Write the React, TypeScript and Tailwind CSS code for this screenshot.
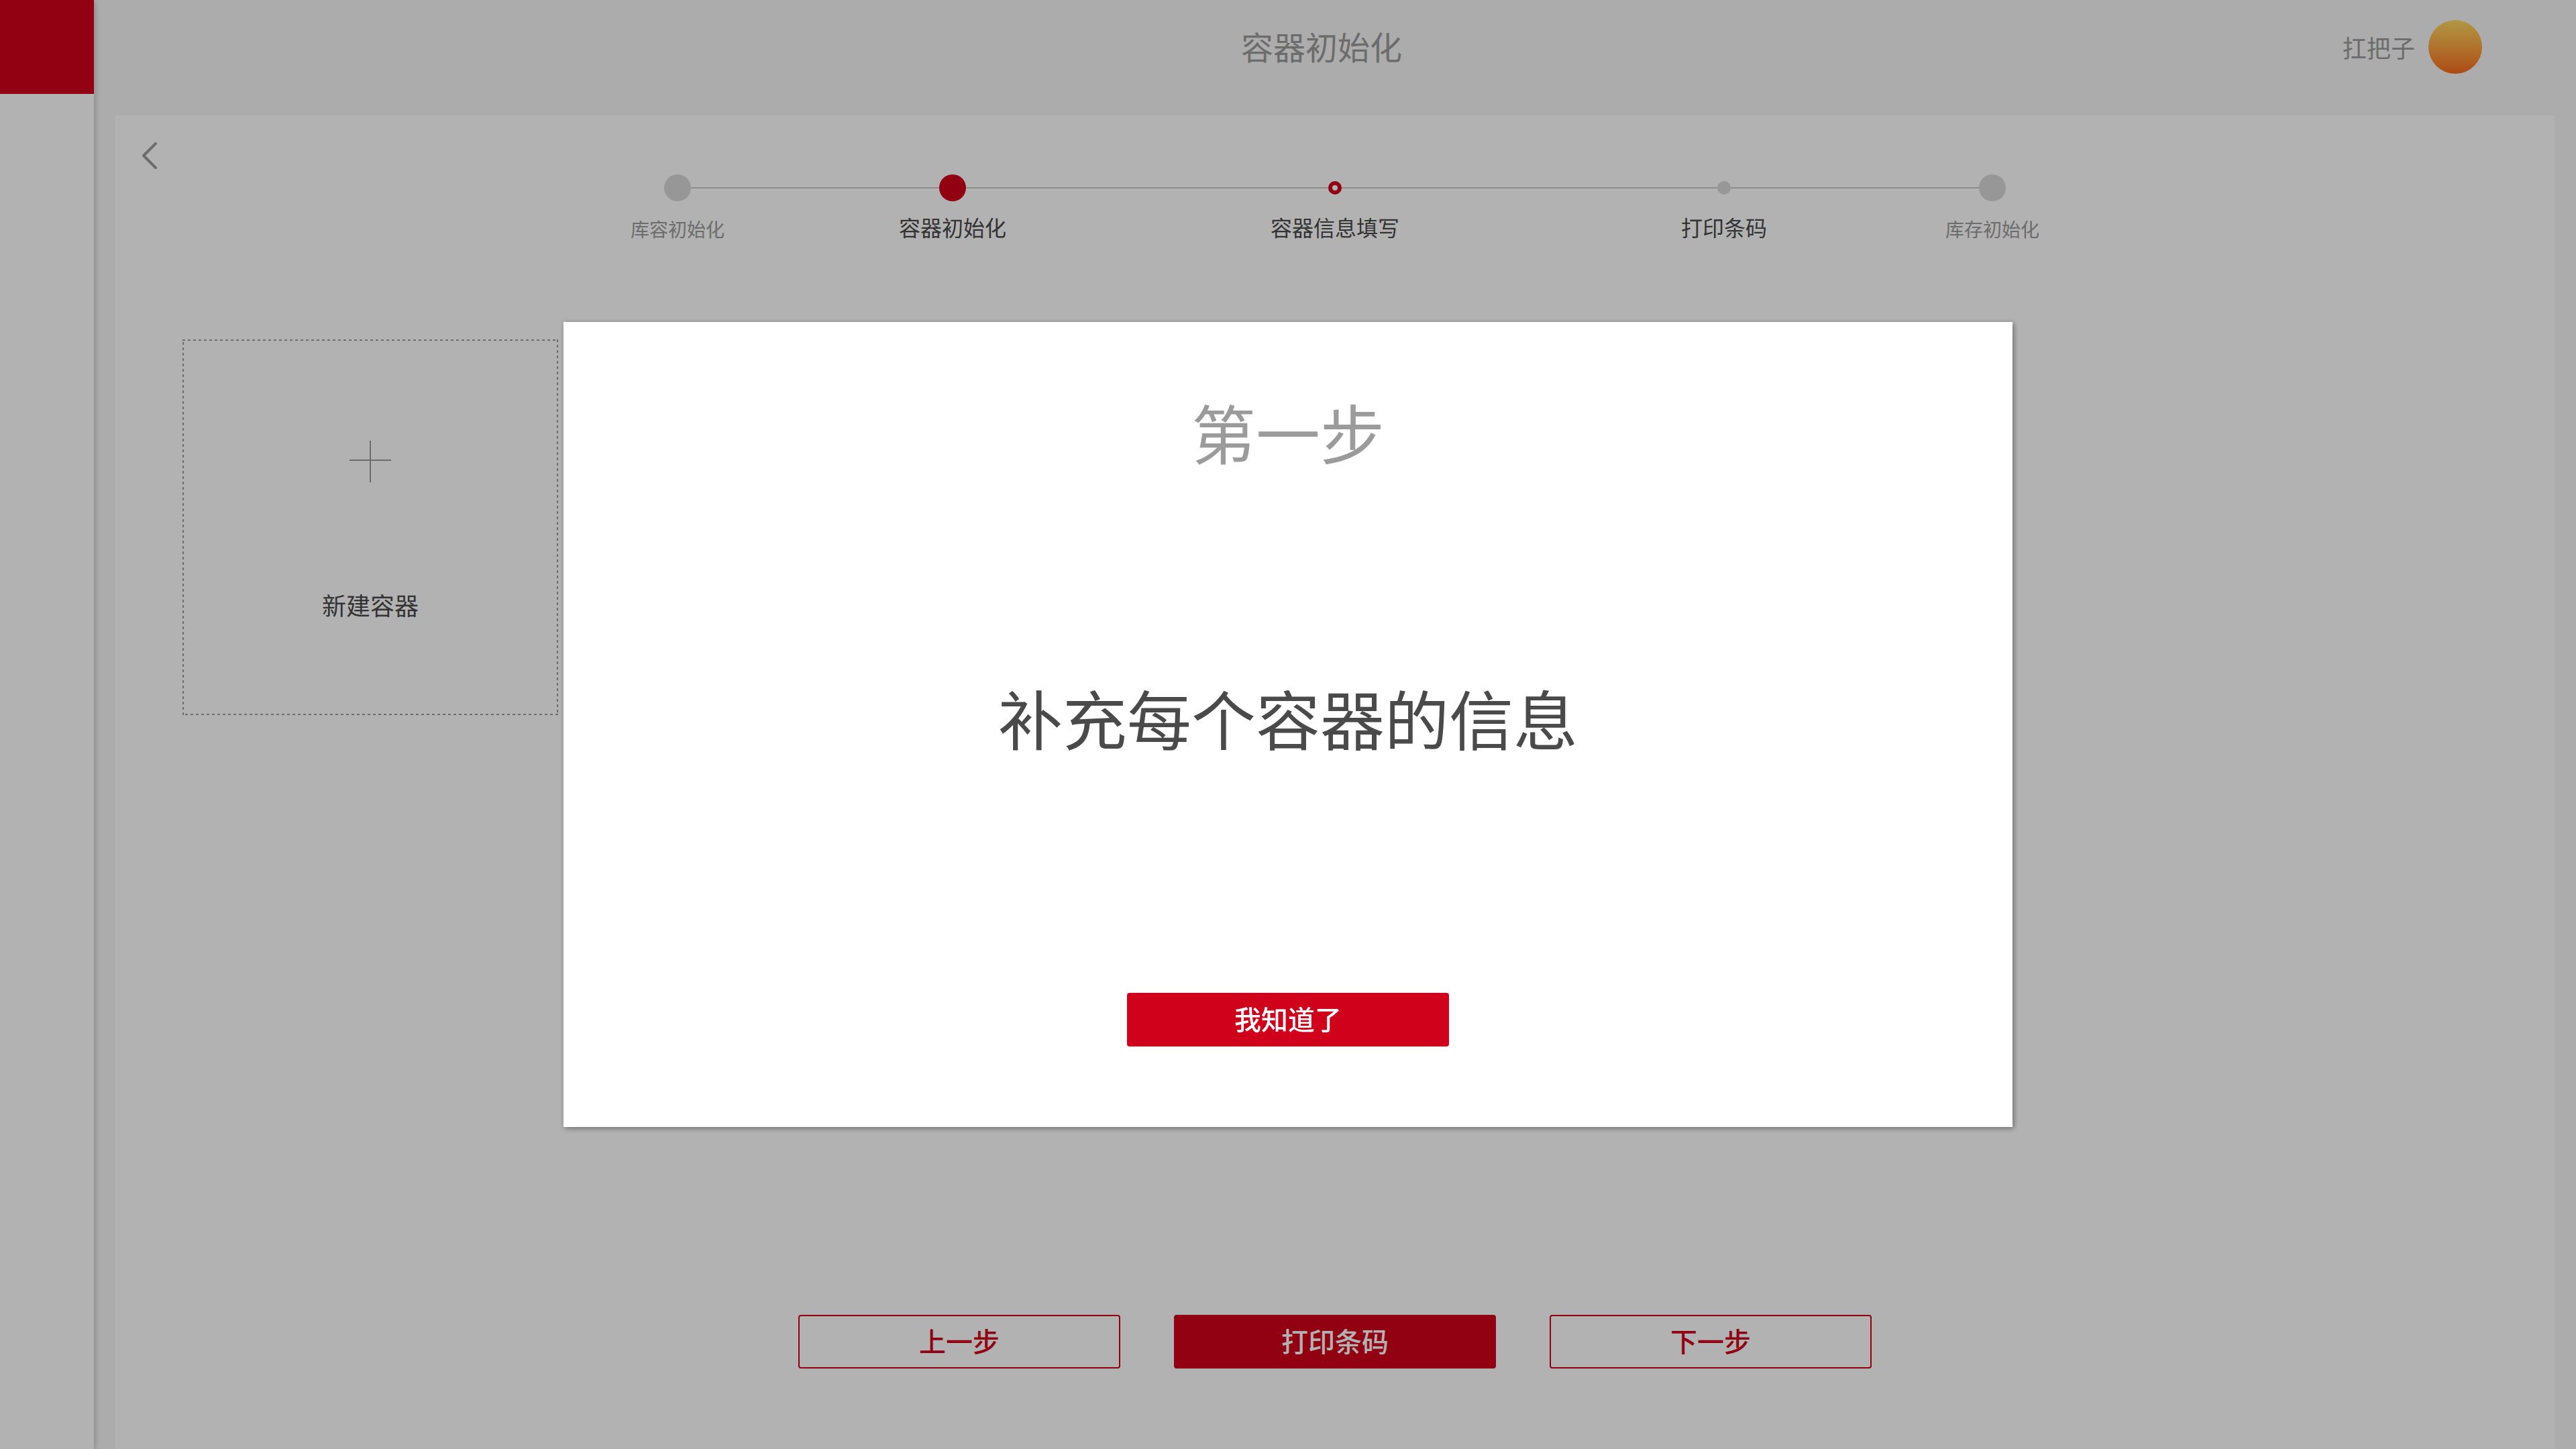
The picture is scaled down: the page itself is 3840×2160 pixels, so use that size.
import React from "react";

type Step = {
  label: string;
  kind: "major" | "minor";
  state: "idle" | "done" | "current";
};

const steps: Step[] = [
  { label: "库容初始化", kind: "major", state: "idle" },
  { label: "容器初始化", kind: "major", state: "done" },
  { label: "容器信息填写", kind: "minor", state: "current" },
  { label: "打印条码", kind: "minor", state: "idle" },
  { label: "库存初始化", kind: "major", state: "idle" },
];

/* Relative length of the connector that follows each step. */
const connectors = ["grow-[37]", "grow-[54]", "grow-[56]", "grow-[37]"];

function StepDot({ step }: { step: Step }) {
  const size = step.kind === "major" ? "size-10" : "size-5";
  const fill =
    step.state === "done"
      ? "bg-[#d0021b]"
      : step.state === "current"
        ? "border-6 border-[#d0021b] bg-white"
        : "bg-[#d8d8d8]";
  return <span className={`rounded-full ${size} ${fill}`} />;
}

function Stepper() {
  return (
    <ol className="mt-[88px] flex">
      {steps.map((step, i) => {
        const outer = step.kind === "major" && step.state === "idle";
        return (
          <React.Fragment key={step.label}>
            <li
              className={`flex shrink-0 flex-col items-center gap-3.5 ${step.kind === "major" ? "w-10" : "w-5"}`}
              aria-current={step.state === "current" ? "step" : undefined}
            >
              <span className="flex h-10 items-center">
                <StepDot step={step} />
              </span>
              <span
                className={`whitespace-nowrap ${outer ? "text-[28px] leading-[54px] text-[#9b9b9b]" : "text-[32px] leading-[48px] text-[#4a4a4a]"}`}
              >
                {step.label}
              </span>
            </li>
            {i < connectors.length && (
              <li aria-hidden="true" className={`flex h-10 basis-0 items-center ${connectors[i]}`}>
                <span className="h-0.5 w-full bg-[#cbcbcb]" />
              </li>
            )}
          </React.Fragment>
        );
      })}
    </ol>
  );
}

function ActionButton({ children, filled = false }: { children: React.ReactNode; filled?: boolean }) {
  return (
    <button
      type="button"
      className={`flex h-20 w-[480px] items-center justify-center rounded border-2 border-[#d0021b] pb-1 text-[40px] leading-none font-medium ${
        filled ? "bg-[#d0021b] text-white" : "bg-white text-[#d0021b]"
      }`}
    >
      {children}
    </button>
  );
}

function NewContainerCard() {
  return (
    <button type="button" className="relative flex size-[560px] flex-col items-center pt-[151px]">
      <svg
        aria-hidden="true"
        className="absolute inset-0 size-full"
        viewBox="0 0 560 560"
        fill="none"
        stroke="#9b9b9b"
        strokeWidth="2"
        strokeDasharray="4 4"
      >
        <path d="M0 1H560M559 0V560M560 559H0M1 560V0" />
      </svg>
      <svg aria-hidden="true" className="size-[62px]" viewBox="0 0 62 62" stroke="#9b9b9b" strokeWidth="2">
        <path d="M0 29H62M31 0V62" />
      </svg>
      <span className="mt-[155px] text-[36px] leading-[54px] text-[#4a4a4a]">新建容器</span>
    </button>
  );
}

export default function App() {
  return (
    <div className="flex min-h-screen bg-[#f7f7f7] font-['Noto_Sans_CJK_SC',sans-serif]" lang="zh-CN">
      <aside className="z-10 w-[140px] shrink-0 bg-white shadow-[2px_2px_8px_rgba(0,0,0,0.2)]">
        <div className="h-[140px] bg-[#d0021b]" />
      </aside>

      <div className="flex min-w-0 flex-1 flex-col">
        <header className="grid h-[140px] grid-cols-[1fr_auto_1fr] items-center pr-10">
          <h1 className="col-start-2 pb-1 text-[48px] leading-[72px] text-[#9b9b9b]">容器初始化</h1>
          <div className="flex items-center gap-5 justify-self-end pr-[100px]">
            <span className="text-[36px] leading-[54px] text-[#9b9b9b]">扛把子</span>
            <span className="size-20 rounded-full bg-linear-to-b from-[#fad961] to-[#f76b1c]" />
          </div>
        </header>

        <main className="mx-8 mt-8 flex flex-1 flex-col bg-white">
          <div className="grid grid-cols-[1fr_55%_1fr] items-start">
            <button type="button" aria-label="返回" className="mt-10 ml-10 justify-self-start">
              <svg
                className="h-10 w-[22px]"
                viewBox="0 0 22 40"
                fill="none"
                stroke="#9b9b9b"
                strokeWidth="4"
                strokeLinecap="round"
                strokeLinejoin="round"
              >
                <path d="M20 2L2 20L20 38" />
              </svg>
            </button>
            <Stepper />
          </div>

          <section className="mt-[138px] px-[100px]">
            <NewContainerCard />
          </section>

          <div className="mt-auto flex justify-center gap-20 pb-[120px]">
            <ActionButton>上一步</ActionButton>
            <ActionButton filled>打印条码</ActionButton>
            <ActionButton>下一步</ActionButton>
          </div>
        </main>
      </div>

      <div className="fixed inset-0 z-20 flex items-center justify-center bg-black/30">
        <div
          role="dialog"
          aria-modal="true"
          aria-labelledby="guide-title"
          className="flex w-9/16 flex-col items-center bg-white pt-[115px] pb-[120px] shadow-[2px_2px_8px_rgba(0,0,0,0.4)]"
        >
          <h2 id="guide-title" className="text-[96px] leading-[96px] text-[#9b9b9b]">
            第一步
          </h2>
          <p className="mt-[330px] mb-[363px] text-[96px] leading-[96px] text-[#4a4a4a]">补充每个容器的信息</p>
          <ActionButton filled>我知道了</ActionButton>
        </div>
      </div>
    </div>
  );
}
